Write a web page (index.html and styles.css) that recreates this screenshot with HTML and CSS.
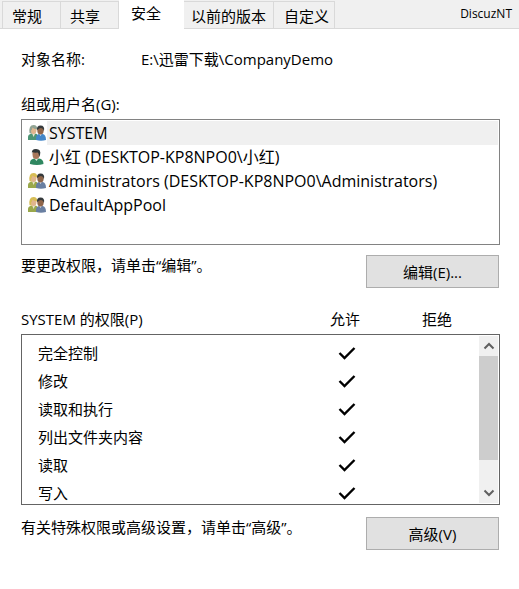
FILE: index.html
```html
<!DOCTYPE html>
<html lang="zh-CN">
  <head>
    <meta charset="UTF-8" />
    <meta name="viewport" content="width=device-width, initial-scale=1.0" />
    <title>CompanyDemo</title>
    <link rel="stylesheet" href="styles.css">
  </head>
  <body>
    <!-- shared icons -->
    <svg class="b-sprite" aria-hidden="true">
      <symbol id="icon-group" viewBox="0 0 18 16">
        <path d="M0 15V12Q0 9 4 8.500H7Q11 9 11 15Z" fill="var(--left)" />
        <path d="M4 8L5.500 12L7.500 8Z" fill="#e6e3cf" />
        <ellipse cx="5.500" cy="5" rx="3" ry="4" fill="#e0b58d" />
        <path d="M1.500 8Q.5 0 5.500 0Q9.500 0 9.500 5L8 4Q6 4 4.500 2.500Q4 5 3 5.500Q3 7.500 4 9Z" fill="var(--hair)" />
        <path d="M8 15Q7.500 9.500 11 9H14.500Q18 9.500 18 15Q13 16.500 8 15Z" fill="var(--right)" />
        <path d="M11 8.500L12.500 11L14 8.500Z" fill="#dfe6ee" />
        <ellipse cx="12.500" cy="5.500" rx="3.200" ry="4" fill="#8f6549" />
        <path d="M9 5Q8.500 .5 12.500 .5Q17 .5 16 6Q15 3 13 3Q11 3 10 4.500Z" fill="#35393b" />
      </symbol>
      <symbol id="icon-user" viewBox="0 0 18 16">
        <path d="M2 15Q1.500 10.500 6 9.500H11Q15.500 10 15.500 15Q9 17 2 15Z" fill="#2f8760" />
        <path d="M6 9L8.500 12L10.500 9Z" fill="#dce9df" />
        <ellipse cx="8" cy="5.500" rx="3.500" ry="4.500" fill="#a8775b" />
        <path d="M4 5Q3 0 8 0Q13.500 0 12 6L11 8Q11 4 9.500 3.500Q6 4 4.500 3Z" fill="#303536" />
      </symbol>
    </svg>

    <div class="b-header">
      <div class="b-tabs" role="tablist">
        <button type="button" class="b-tabs__tab" role="tab">常规</button>
        <button type="button" class="b-tabs__tab" role="tab">共享</button>
        <button type="button" class="b-tabs__tab b-tabs__tab_active" role="tab" aria-selected="true">安全</button>
        <button type="button" class="b-tabs__tab" role="tab">以前的版本</button>
        <button type="button" class="b-tabs__tab" role="tab">自定义</button>
      </div>
      <span class="b-header__name">DiscuzNT</span>
    </div>

    <main class="b-main">
      <div class="b-object">
        <span class="b-object__label">对象名称:</span>
        <span>E:\迅雷下载\CompanyDemo</span>
      </div>

      <p class="b-label" id="users-label">组或用户名(G):</p>
      <ul class="b-users" role="listbox" aria-labelledby="users-label" tabindex="0">
        <li class="b-users__item" role="option" aria-selected="true">
          <svg class="b-users__icon b-users__icon_blue"><use href="#icon-group" /></svg>
          <span class="b-users__name b-users__name_selected">SYSTEM</span>
        </li>
        <li class="b-users__item" role="option">
          <svg class="b-users__icon"><use href="#icon-user" /></svg>
          <span class="b-users__name">小红 (DESKTOP-KP8NPO0\小红)</span>
        </li>
        <li class="b-users__item" role="option">
          <svg class="b-users__icon"><use href="#icon-group" /></svg>
          <span class="b-users__name">Administrators (DESKTOP-KP8NPO0\Administrators)</span>
        </li>
        <li class="b-users__item" role="option">
          <svg class="b-users__icon"><use href="#icon-group" /></svg>
          <span class="b-users__name">DefaultAppPool</span>
        </li>
      </ul>

      <div class="b-action">
        <p>要更改权限，请单击“编辑”。</p>
        <button type="button" class="b-button">编辑(E)...</button>
      </div>

      <div class="b-caption">
        <span class="b-caption__title" id="rights-label">SYSTEM 的权限(P)</span>
        <span class="b-caption__column">允许</span>
        <span class="b-caption__column">拒绝</span>
      </div>
      <div class="b-rights">
        <table class="b-rights__table" aria-labelledby="rights-label">
          <tr>
            <th><label for="full">完全控制</label></th>
            <td><input class="b-check" type="checkbox" id="full" checked></td>
            <td></td>
          </tr>
          <tr>
            <th><label for="modify">修改</label></th>
            <td><input class="b-check" type="checkbox" id="modify" checked></td>
            <td></td>
          </tr>
          <tr>
            <th><label for="execute">读取和执行</label></th>
            <td><input class="b-check" type="checkbox" id="execute" checked></td>
            <td></td>
          </tr>
          <tr>
            <th><label for="list">列出文件夹内容</label></th>
            <td><input class="b-check" type="checkbox" id="list" checked></td>
            <td></td>
          </tr>
          <tr>
            <th><label for="read">读取</label></th>
            <td><input class="b-check" type="checkbox" id="read" checked></td>
            <td></td>
          </tr>
          <tr>
            <th><label for="write">写入</label></th>
            <td><input class="b-check" type="checkbox" id="write" checked></td>
            <td></td>
          </tr>
        </table>
        <div class="b-scroll">
          <button type="button" class="b-scroll__arrow" aria-label="向上">
            <svg width="12" height="8" viewBox="0 0 12 8"><path d="M1.500 6.500L6 2L10.500 6.500" /></svg>
          </button>
          <div class="b-scroll__track"><div class="b-scroll__thumb"></div></div>
          <button type="button" class="b-scroll__arrow" aria-label="向下">
            <svg width="12" height="8" viewBox="0 0 12 8"><path d="M1.500 1.500L6 6L10.500 1.500" /></svg>
          </button>
        </div>
      </div>

      <div class="b-action">
        <p>有关特殊权限或高级设置，请单击“高级”。</p>
        <button type="button" class="b-button">高级(V)</button>
      </div>
    </main>
  </body>
</html>
```
FILE: styles.css
```css
* {
  box-sizing: border-box;
}

body {
  margin: 0;
  background: #fff;
  color: #000;
  font: 15px/20px "Open Sans", "Noto Sans CJK SC", sans-serif;
}

button {
  font: inherit;
  color: inherit;
  padding: 0;
}

p,
ul {
  margin: 0;
  padding: 0;
}

.b-sprite {
  display: none;
}

/* tabs */
.b-header {
  display: flex;
  justify-content: space-between;
  height: 29px;
  padding: 0 7px 0 2px;
  background: linear-gradient(#d9d9d9, #d9d9d9) bottom / 100% 1px no-repeat #f0f0f0;
}

.b-header__name {
  padding-top: 4px;
  font-size: 12px;
}

.b-tabs {
  display: flex;
}

.b-tabs__tab {
  height: 28px;
  margin-top: 1px;
  padding: 2px 5px 0 10px;
  border: 1px solid #d9d9d9;
  border-left-width: 0;
  background: #f0f0f0;
}

.b-tabs__tab:first-child {
  border-left-width: 1px;
}

.b-tabs__tab:nth-child(-n+2) {
  padding: 2px 18px 0 9px;
}

.b-tabs__tab:nth-child(4) {
  padding: 2px 7px 0 7px;
}

.b-tabs__tab.b-tabs__tab_active {
  height: 29px;
  margin-top: 0;
  padding: 0 23px 3px 12px;
  border: 0;
  background: #fff;
}

/* content */
.b-main {
  padding: 20px 19px 20px 21px;
}

.b-object {
  display: flex;
}

.b-object__label {
  width: 120px;
}

.b-label {
  margin: 25px 0 5px;
}

.b-users {
  height: 126px;
  padding: 1px;
  border: 1px solid #828282;
  list-style: none;
}

.b-users__item {
  display: flex;
  align-items: center;
  height: 24px;
  padding-left: 5px;
}

.b-users__icon {
  --left: #9aa84b;
  --right: #697fa1;
  --hair: #d6bd55;
  flex: none;
  width: 18px;
  height: 16px;
  margin-right: 1px;
}

.b-users__icon_blue {
  --left: #4d9575;
  --right: #4286c8;
  --hair: #91a494;
}

.b-users__name {
  flex: 1;
  padding-left: 2px;
  font-size: 16px;
  line-height: 24px;
}

.b-users__name_selected {
  background: #f0f0f0;
}

.b-action {
  display: flex;
  justify-content: space-between;
  align-items: flex-start;
  margin: 10px 1px 0 0;
}

.b-button {
  width: 133px;
  height: 33px;
  border: 1px solid #adadad;
  background: #e1e1e1;
}

/* permissions */
.b-caption {
  display: flex;
  margin: 21px 17px 5px 0;
}

.b-caption__title {
  flex: 1;
}

.b-caption__column {
  width: 92px;
  text-align: center;
}

.b-rights {
  display: flex;
  height: 171px;
  margin-bottom: 12px;
  padding: 0 1px 0 0;
  border: 1px solid #646464;
  overflow: hidden;
}

.b-rights__table {
  flex: 1;
  align-self: flex-start;
  margin-top: 4px;
  border-collapse: collapse;
  table-layout: fixed;
}

.b-rights__table tr {
  height: 28px;
}

.b-rights__table th {
  padding: 0 0 0 16px;
  font-weight: inherit;
  text-align: left;
}

.b-rights__table td {
  width: 88px;
  padding: 0;
  text-align: center;
}

.b-check {
  appearance: none;
  display: block;
  width: 18px;
  height: 14px;
  margin: 0 auto;
}

.b-check:checked {
  background: url("data:image/svg+xml,%3Csvg xmlns='http://www.w3.org/2000/svg' viewBox='0 0 18 14'%3E%3Cpath d='M1.500 7L6.500 12L16.500 2' fill='none' stroke='%23000' stroke-width='2.400'/%3E%3C/svg%3E");
}

.b-scroll {
  display: flex;
  flex-direction: column;
  width: 19px;
  margin: 1px 0;
  background: #f0f0f0;
}

.b-scroll__arrow {
  display: flex;
  align-items: center;
  justify-content: center;
  height: 20px;
  border: 0;
  background: none;
}

.b-scroll__arrow path {
  fill: none;
  stroke: #606060;
  stroke-width: 2;
}

.b-scroll__track {
  flex: 1;
}

.b-scroll__thumb {
  height: 82%;
  background: #cdcdcd;
}
```
